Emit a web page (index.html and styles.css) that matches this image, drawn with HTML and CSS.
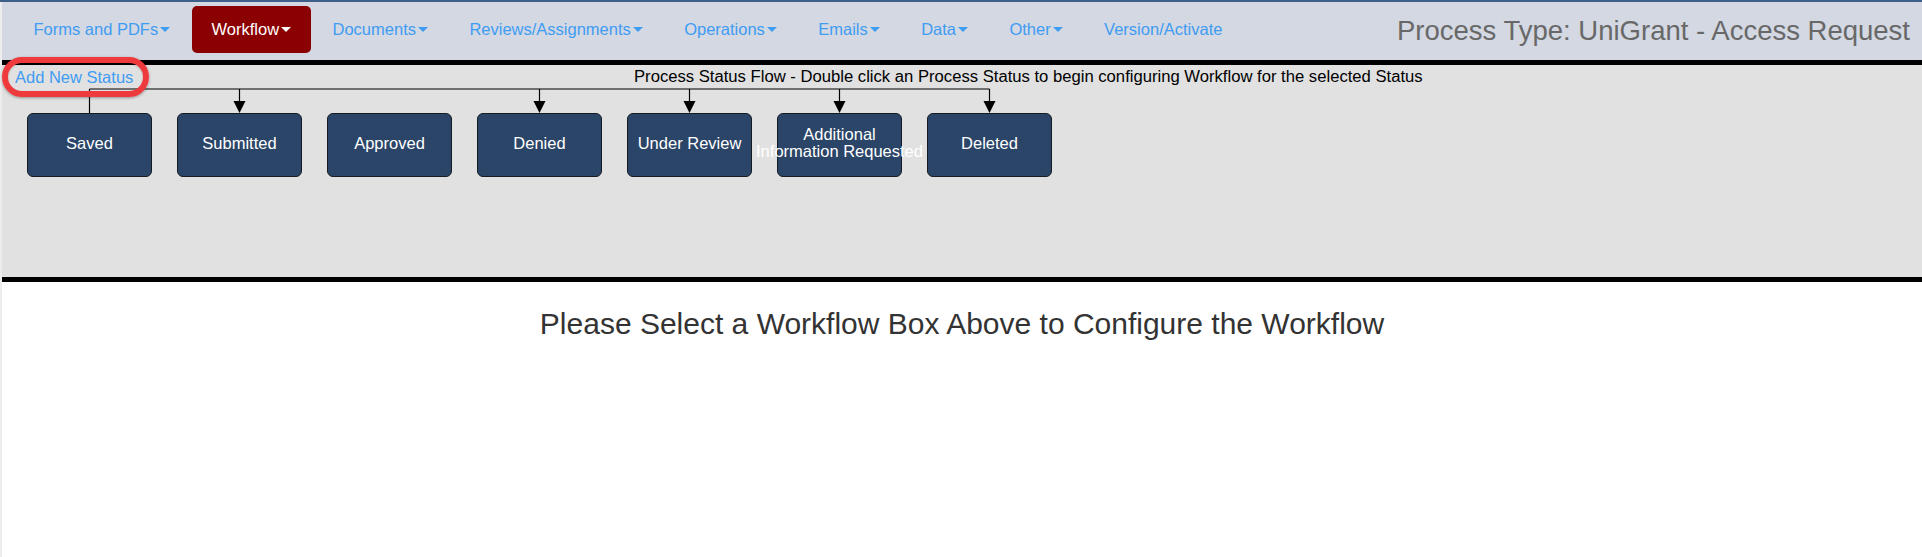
FILE: index.html
```html
<!DOCTYPE html>
<html>
<head>
<meta charset="utf-8">
<title>Workflow</title>
<link rel="stylesheet" href="styles.css">
</head>
<body>
<div class="page">
  <header class="navbar">
    <ul class="nav">
      <li><a class="nav-link" href="#">Forms and PDFs<span class="caret"></span></a></li>
      <li><a class="nav-link active" href="#">Workflow<span class="caret"></span></a></li>
      <li><a class="nav-link" href="#">Documents<span class="caret"></span></a></li>
      <li><a class="nav-link" href="#">Reviews/Assignments<span class="caret"></span></a></li>
      <li><a class="nav-link" href="#">Operations<span class="caret"></span></a></li>
      <li><a class="nav-link" href="#">Emails<span class="caret"></span></a></li>
      <li><a class="nav-link" href="#">Data<span class="caret"></span></a></li>
      <li><a class="nav-link" href="#">Other<span class="caret"></span></a></li>
      <li><a class="nav-link" href="#">Version/Activate</a></li>
    </ul>
    <div class="process-title">Process Type: UniGrant - Access Request</div>
  </header>

  <section class="flow-panel">
    <svg class="flow-lines" width="1000" height="50" viewBox="0 0 1000 50">
      <g stroke="#000" stroke-width="1.2" fill="none">
        <line x1="87.5" y1="24" x2="987.5" y2="24"/>
        <line x1="87.5" y1="24" x2="87.5" y2="48"/>
        <line x1="237.5" y1="24" x2="237.5" y2="37"/>
        <line x1="537.5" y1="24" x2="537.5" y2="37"/>
        <line x1="687.5" y1="24" x2="687.5" y2="37"/>
        <line x1="837.5" y1="24" x2="837.5" y2="37"/>
        <line x1="987.5" y1="24" x2="987.5" y2="37"/>
      </g>
      <g fill="#000">
        <polygon points="231.5,36 243.5,36 237.5,48"/>
        <polygon points="531.5,36 543.5,36 537.5,48"/>
        <polygon points="681.5,36 693.5,36 687.5,48"/>
        <polygon points="831.5,36 843.5,36 837.5,48"/>
        <polygon points="981.5,36 993.5,36 987.5,48"/>
      </g>
    </svg>
    <div class="flow-head">
      <a class="add-status" href="#">Add New Status</a>
      <div class="flow-caption">Process Status Flow - Double click an Process Status to begin configuring Workflow for the selected Status</div>
    </div>
    <div class="highlight"></div>
    <div class="status-row">
      <div class="status-box"><span>Saved</span></div>
      <div class="status-box"><span>Submitted</span></div>
      <div class="status-box"><span>Approved</span></div>
      <div class="status-box"><span>Denied</span></div>
      <div class="status-box"><span>Under Review</span></div>
      <div class="status-box"><span>Additional<br>Information Requested</span></div>
      <div class="status-box"><span>Deleted</span></div>
    </div>
  </section>

  <h3 class="select-msg">Please Select a Workflow Box Above to Configure the Workflow</h3>
</div>
</body>
</html>
```

FILE: styles.css
```css
html, body {
  margin: 0;
  padding: 0;
}

body {
  background: #ededed;
  border-top: 2px solid #3e5f8a;
  font-family: "Liberation Sans", Arial, sans-serif;
  font-size: 16.5px;
  color: #333;
  height: 555px;
  overflow: hidden;
}

.page {
  margin-left: 2px;
  background: #fff;
  height: 100%;
}

.navbar {
  display: flex;
  align-items: flex-start;
  height: 58px;
  background: #d3d8e2;
}

.nav {
  display: flex;
  gap: 2.4px;
  list-style: none;
  margin: 0;
  padding: 4px 0 0 12px;
}

.nav-link {
  display: flex;
  align-items: center;
  height: 47px;
  padding: 0 19.5px;
  border-radius: 5px;
  color: #3f9cf3;
  text-decoration: none;
  white-space: nowrap;
}

.nav-link.active {
  background: #8b0000;
  color: #fff;
}

.caret {
  display: inline-block;
  width: 0;
  height: 0;
  margin-left: 2px;
  border-top: 5px solid currentColor;
  border-left: 5px solid transparent;
  border-right: 5px solid transparent;
}

.process-title {
  margin-left: auto;
  align-self: center;
  padding-right: 12px;
  font-size: 27.5px;
  color: #686868;
  white-space: nowrap;
}

.flow-panel {
  position: relative;
  height: 212px;
  background: #e1e1e1;
  border-top: 5px solid #000;
  border-bottom: 5px solid #000;
}

.flow-lines {
  position: absolute;
  left: 0;
  top: 0;
}

.flow-head {
  position: relative;
  display: grid;
  grid-template-columns: 632px auto;
  padding-top: 2px;
  line-height: 20px;
}

.add-status {
  padding-left: 13px;
  color: #3f9cf3;
  text-decoration: none;
}

.flow-caption {
  color: #000;
  font-size: 16.65px;
  white-space: nowrap;
}

.highlight {
  position: absolute;
  left: 0;
  top: -8px;
  width: 135px;
  height: 28px;
  border: 6px solid #ee3a3d;
  border-radius: 20px;
  box-shadow: 0 1px 3px rgba(0, 0, 0, 0.35), inset 0 1px 2px rgba(0, 0, 0, 0.2);
}

.status-row {
  position: relative;
  display: flex;
  gap: 25px;
  margin: 26px 0 0 25px;
}

.status-box {
  box-sizing: border-box;
  display: flex;
  align-items: center;
  justify-content: center;
  width: 125px;
  height: 64px;
  background: #2a4567;
  border: 1px solid #161b22;
  border-radius: 6px;
  color: #fff;
  text-align: center;
  line-height: 16.6px;
}

.status-box span {
  white-space: nowrap;
  padding-bottom: 4px;
}

.select-msg {
  margin: 25px 0 0;
  font-size: 30px;
  font-weight: normal;
  line-height: 33px;
  text-align: center;
  color: #333;
}
```
